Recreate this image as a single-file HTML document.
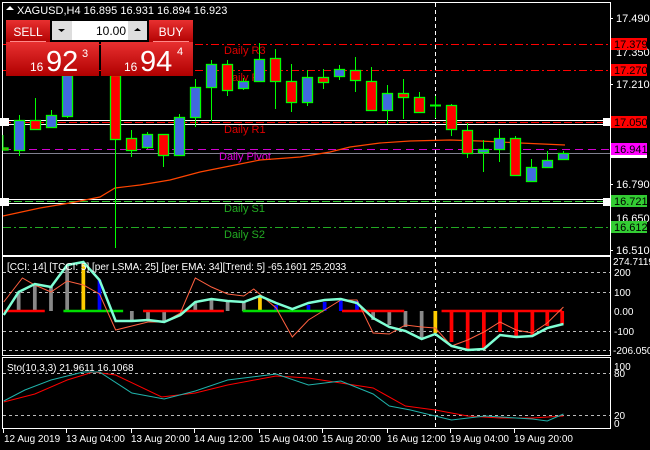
<!DOCTYPE html>
<html><head><meta charset="utf-8"><style>
html,body{margin:0;padding:0;background:#000;width:650px;height:450px;overflow:hidden}
svg{display:block;font-family:"Liberation Sans",sans-serif}
</style></head><body>
<svg width="650" height="450" viewBox="0 0 650 450" xmlns="http://www.w3.org/2000/svg">
<rect width="650" height="450" fill="#000"/>
<!-- pane borders -->
<rect x="2.5" y="2.5" width="608" height="253" fill="none" stroke="#fff"/>
<rect x="2.5" y="256.5" width="608" height="99" fill="none" stroke="#fff"/>
<rect x="2.5" y="357.5" width="608" height="71" fill="none" stroke="#fff"/>

<!-- level lines -->
<line x1="3" y1="44.5" x2="610" y2="44.5" stroke="#f00" stroke-dasharray="8,3,2,3"/>
<line x1="3" y1="70.5" x2="610" y2="70.5" stroke="#f00" stroke-dasharray="8,3,2,3"/>
<line x1="3" y1="120.5" x2="610" y2="120.5" stroke="#fff"/>
<line x1="3" y1="124.5" x2="610" y2="124.5" stroke="#fff"/>
<line x1="3" y1="122.5" x2="610" y2="122.5" stroke="#f00" stroke-dasharray="8,3"/>
<line x1="3" y1="149.5" x2="610" y2="149.5" stroke="#d000d0" stroke-dasharray="8,5"/>
<line x1="3" y1="153.5" x2="610" y2="153.5" stroke="#808090"/>
<line x1="3" y1="199.5" x2="610" y2="199.5" stroke="#fff"/>
<line x1="3" y1="203.5" x2="610" y2="203.5" stroke="#fff"/>
<line x1="3" y1="201.5" x2="610" y2="201.5" stroke="#3c3" stroke-dasharray="8,3"/>
<line x1="3" y1="227.5" x2="610" y2="227.5" stroke="#2a2" stroke-dasharray="8,3,2,3"/>
<rect x="0" y="118" width="9" height="8" fill="#fff"/>
<rect x="0" y="198" width="9" height="8" fill="#fff"/>
<rect x="603" y="118" width="7" height="8" fill="#fff"/>
<rect x="603" y="198" width="7" height="8" fill="#fff"/>

<!-- vertical dashed line -->
<line x1="435.5" y1="3" x2="435.5" y2="429" stroke="#fff" stroke-dasharray="4,3"/>

<!-- labels -->
<g font-size="11">
<text x="224" y="54" fill="#e00000">Daily R3</text>
<text x="224" y="81" fill="#e00000">Daily R2</text>
<text x="224" y="133" fill="#e00000">Daily R1</text>
<text x="219" y="160" fill="#e000e0">Daily Pivot</text>
<text x="224" y="212" fill="#2a2">Daily S1</text>
<text x="224" y="238" fill="#2a2">Daily S2</text>
</g>

<!-- MA -->
<polyline fill="none" stroke="#ff4500" stroke-width="1.2" points="3,216 40,208 70,203 100,197 115,188 140,185 170,180 200,172 230,166 260,160 300,157 330,152 350,147 380,143 410,141 450,140 480,141 520,143 565,145"/>

<!-- candles -->
<g stroke="#0f0" stroke-width="1">
<line x1="19.5" y1="115" x2="19.5" y2="156"/><line x1="35.5" y1="98" x2="35.5" y2="129"/><line x1="51.5" y1="110" x2="51.5" y2="127"/><line x1="67.5" y1="70" x2="67.5" y2="118"/>
<line x1="115.5" y1="75" x2="115.5" y2="248"/><line x1="131.5" y1="130" x2="131.5" y2="157"/><line x1="147.5" y1="132" x2="147.5" y2="149"/><line x1="163.5" y1="134" x2="163.5" y2="167"/>
<line x1="179.5" y1="114" x2="179.5" y2="156"/><line x1="195.5" y1="79" x2="195.5" y2="127"/><line x1="211.5" y1="60" x2="211.5" y2="121"/><line x1="227.5" y1="60" x2="227.5" y2="96"/>
<line x1="243.5" y1="78" x2="243.5" y2="90"/><line x1="259.5" y1="43" x2="259.5" y2="81"/><line x1="275.5" y1="49" x2="275.5" y2="109"/><line x1="291.5" y1="64" x2="291.5" y2="112"/>
<line x1="307.5" y1="70" x2="307.5" y2="106"/><line x1="323.5" y1="69" x2="323.5" y2="89"/><line x1="339.5" y1="65" x2="339.5" y2="80"/><line x1="355.5" y1="57" x2="355.5" y2="92"/>
<line x1="371.5" y1="67" x2="371.5" y2="111"/><line x1="387.5" y1="85" x2="387.5" y2="124"/><line x1="403.5" y1="79" x2="403.5" y2="119"/><line x1="419.5" y1="92" x2="419.5" y2="113"/>
<line x1="435.5" y1="96" x2="435.5" y2="118"/><line x1="430" y1="105.5" x2="441" y2="105.5" stroke-width="2"/><line x1="451.5" y1="104" x2="451.5" y2="136"/><line x1="467.5" y1="123" x2="467.5" y2="158"/>
<line x1="483.5" y1="140" x2="483.5" y2="172"/><line x1="499.5" y1="129" x2="499.5" y2="162"/><line x1="515.5" y1="136" x2="515.5" y2="175"/><line x1="531.5" y1="159" x2="531.5" y2="181"/>
<line x1="547.5" y1="151" x2="547.5" y2="167"/><line x1="563.5" y1="151" x2="563.5" y2="160"/>
<line x1="3" y1="135" x2="3" y2="150"/>
</g>
<g stroke="#0f0" stroke-width="1.3">
<rect x="3" y="148" width="5" height="2" fill="#f00"/>
<rect x="14.5" y="120.5" width="10" height="30" fill="#4169e1"/>
<rect x="30.5" y="120.5" width="10" height="9" fill="#f00"/>
<rect x="46.5" y="115.5" width="10" height="12" fill="#4169e1"/>
<rect x="62.5" y="75.5" width="10" height="41" fill="#4169e1"/>
<rect x="110.5" y="75.5" width="10" height="64" fill="#f00"/>
<rect x="126.5" y="138.5" width="10" height="12" fill="#f00"/>
<rect x="142.5" y="134.5" width="10" height="13" fill="#4169e1"/>
<rect x="158.5" y="134.5" width="10" height="21" fill="#f00"/>
<rect x="174.5" y="117.5" width="10" height="38" fill="#4169e1"/>
<rect x="190.5" y="87.5" width="10" height="30" fill="#4169e1"/>
<rect x="206.5" y="64.5" width="10" height="23" fill="#4169e1"/>
<rect x="222.5" y="64.5" width="10" height="26" fill="#f00"/>
<rect x="238.5" y="81.5" width="10" height="7" fill="#4169e1"/>
<rect x="254.5" y="59.5" width="10" height="22" fill="#4169e1"/>
<rect x="270.5" y="58.5" width="10" height="23" fill="#f00"/>
<rect x="286.5" y="81.5" width="10" height="21" fill="#f00"/>
<rect x="302.5" y="77.5" width="10" height="25" fill="#4169e1"/>
<rect x="318.5" y="77.5" width="10" height="5" fill="#f00"/>
<rect x="334.5" y="69.5" width="10" height="7" fill="#4169e1"/>
<rect x="350.5" y="70.5" width="10" height="10" fill="#f00"/>
<rect x="366.5" y="81.5" width="10" height="29" fill="#f00"/>
<rect x="382.5" y="93.5" width="10" height="17" fill="#4169e1"/>
<rect x="398.5" y="93.5" width="10" height="4" fill="#f00"/>
<rect x="414.5" y="97.5" width="10" height="15" fill="#f00"/>
<rect x="446.5" y="105.5" width="10" height="24" fill="#f00"/>
<rect x="462.5" y="130.5" width="10" height="23" fill="#f00"/>
<rect x="478.5" y="149.5" width="10" height="3" fill="#4169e1"/>
<rect x="494.5" y="138.5" width="10" height="11" fill="#4169e1"/>
<rect x="510.5" y="138.5" width="10" height="37" fill="#f00"/>
<rect x="526.5" y="167.5" width="10" height="14" fill="#4169e1"/>
<rect x="542.5" y="160.5" width="10" height="7" fill="#4169e1"/>
<rect x="558.5" y="153.5" width="10" height="6" fill="#4169e1"/>
</g>

<!-- price axis -->
<g font-size="11" fill="#fff">
<text x="616" y="22">17.490</text>
<text x="616" y="56">17.350</text>
<text x="616" y="88">17.210</text>
<text x="616" y="188">16.790</text>
<text x="616" y="222">16.650</text>
<text x="616" y="254">16.510</text>
</g>
<g stroke="#fff"><line x1="610" y1="18.5" x2="613" y2="18.5"/><line x1="610" y1="184.5" x2="613" y2="184.5"/><line x1="610" y1="250.5" x2="613" y2="250.5"/><line x1="610" y1="84.5" x2="613" y2="84.5"/></g>
<rect x="611" y="38" width="36" height="12" fill="#f00"/><text x="614" y="48" font-size="11" fill="#000">17.379</text>
<rect x="611" y="64" width="36" height="12" fill="#f00"/><text x="614" y="74" font-size="11" fill="#000">17.270</text>
<rect x="611" y="116" width="36" height="12" fill="#f00"/><text x="614" y="126" font-size="11" fill="#000">17.050</text>
<rect x="611" y="152" width="36" height="6" fill="#fff"/>
<rect x="611" y="143" width="36" height="12" fill="#f0f"/><text x="614" y="153" font-size="11" fill="#000">16.941</text>
<rect x="611" y="195" width="36" height="12" fill="#3c3"/><text x="614" y="205" font-size="11" fill="#000">16.721</text>
<rect x="611" y="221" width="36" height="12" fill="#3c3"/><text x="614" y="231" font-size="11" fill="#000">16.612</text>

<!-- header -->
<polygon points="6,10 10,6 14,10" fill="#fff"/>
<text x="17" y="14" font-size="11" fill="#fff">XAGUSD,H4  16.895 16.931 16.894 16.923</text>

<!-- trade panel -->
<defs><linearGradient id="rg" x1="0" y1="0" x2="0" y2="1"><stop offset="0" stop-color="#e83030"/><stop offset="1" stop-color="#b00000"/></linearGradient></defs>
<rect x="6" y="20" width="44" height="23" fill="url(#rg)"/>
<line x1="10" y1="41.5" x2="46" y2="41.5" stroke="#f88"/>
<text x="28" y="36" font-size="12" fill="#fff" text-anchor="middle">SELL</text>
<rect x="50" y="20" width="99" height="23" fill="#000"/>
<rect x="52" y="21" width="20" height="19" fill="#ddd"/><polygon points="58,29 65,29 61.5,32" fill="#000"/>
<rect x="72" y="21" width="56" height="19" fill="#fff"/><text x="126" y="35" font-size="12" fill="#000" text-anchor="end">10.00</text>
<rect x="128" y="21" width="19" height="19" fill="#ddd"/><polygon points="134,31 141,31 137.5,28" fill="#000"/>
<rect x="149" y="20" width="44" height="23" fill="url(#rg)"/>
<line x1="153" y1="41.5" x2="189" y2="41.5" stroke="#f88"/>
<text x="171" y="36" font-size="12" fill="#fff" text-anchor="middle">BUY</text>
<rect x="6" y="42" width="93" height="34" fill="url(#rg)"/>
<rect x="101" y="42" width="92" height="34" fill="url(#rg)"/>
<text x="30" y="71" font-size="12" fill="#fff">16</text>
<text x="46" y="71" font-size="29" fill="#fff">92</text>
<text x="82" y="57" font-size="11" fill="#fff">3</text>
<text x="124" y="71" font-size="12" fill="#fff">16</text>
<text x="140" y="71" font-size="29" fill="#fff">94</text>
<text x="177" y="55" font-size="11" fill="#fff">4</text>

<!-- CCI pane -->
<g stroke="#bbb" stroke-dasharray="3,3"><line x1="3" y1="272.5" x2="610" y2="272.5"/><line x1="3" y1="292.5" x2="610" y2="292.5"/><line x1="3" y1="331.5" x2="610" y2="331.5"/><line x1="3" y1="350.5" x2="610" y2="350.5"/>
<line x1="3" y1="373.5" x2="610" y2="373.5"/><line x1="3" y1="415.5" x2="610" y2="415.5"/></g>
<g transform="matrix(1.2438 0 0 1 0 0)">
<g stroke-width="3">
<line x1="15" y1="311" x2="15" y2="292" stroke="#888"/><line x1="28" y1="311" x2="28" y2="284" stroke="#888"/><line x1="41" y1="311" x2="41" y2="287" stroke="#888"/><line x1="54" y1="311" x2="54" y2="265" stroke="#888"/><line x1="67" y1="311" x2="67" y2="264" stroke="#fc0"/><line x1="80" y1="311" x2="80" y2="280" stroke="#00f"/>
<line x1="106" y1="311" x2="106" y2="321" stroke="#888"/><line x1="119" y1="311" x2="119" y2="320" stroke="#888"/><line x1="132" y1="311" x2="132" y2="322" stroke="#888"/>
<line x1="157" y1="311" x2="157" y2="302" stroke="#888"/><line x1="170" y1="311" x2="170" y2="300" stroke="#888"/><line x1="183" y1="311" x2="183" y2="301" stroke="#888"/><line x1="196" y1="311" x2="196" y2="302" stroke="#888"/><line x1="209" y1="311" x2="209" y2="297" stroke="#fc0"/>
<line x1="222" y1="311" x2="222" y2="305" stroke="#00f"/><line x1="248" y1="311" x2="248" y2="305" stroke="#00f"/><line x1="261" y1="311" x2="261" y2="302" stroke="#00f"/><line x1="274" y1="311" x2="274" y2="300" stroke="#00f"/><line x1="287" y1="311" x2="287" y2="301" stroke="#00f"/>
<line x1="300" y1="311" x2="300" y2="320" stroke="#888"/><line x1="313" y1="311" x2="313" y2="325" stroke="#888"/><line x1="326" y1="311" x2="326" y2="327" stroke="#888"/><line x1="339" y1="311" x2="339" y2="339" stroke="#888"/><line x1="350" y1="311" x2="350" y2="333" stroke="#fc0"/>
<line x1="363" y1="311" x2="363" y2="342" stroke="#f00"/><line x1="376" y1="311" x2="376" y2="350" stroke="#f00"/><line x1="389" y1="311" x2="389" y2="350" stroke="#f00"/><line x1="402" y1="311" x2="402" y2="332" stroke="#f00"/><line x1="415" y1="311" x2="415" y2="336" stroke="#f00"/><line x1="428" y1="311" x2="428" y2="335" stroke="#f00"/><line x1="440" y1="311" x2="440" y2="326" stroke="#f00"/><line x1="452" y1="311" x2="452" y2="324" stroke="#f00"/>
</g>
<g stroke-width="2.5">
<line x1="3" y1="311" x2="36" y2="311" stroke="#f00"/><line x1="51" y1="311" x2="99" y2="311" stroke="#0d0"/>
<line x1="115" y1="311" x2="180" y2="311" stroke="#f00"/><line x1="195" y1="311" x2="260" y2="311" stroke="#0d0"/>
<line x1="275" y1="311" x2="325" y2="311" stroke="#f00"/><line x1="355" y1="311" x2="452" y2="311" stroke="#f00"/>
</g>
<polyline fill="none" stroke="#ff6040" stroke-width="1" vector-effect="non-scaling-stroke" points="3,302 18,278 28,285 41,292 54,281 67,285 80,294 93,330 106,326 119,322 132,322 145,313 157,278 170,287 183,294 196,296 204,289 222,308 235,337 248,320 261,310 274,300 287,300 300,333 313,334 326,325 339,327 350,328 363,346 376,340 389,332 402,322 415,330 428,333 440,323 453,307"/>
<polyline fill="none" stroke="#7fffd4" stroke-width="2.5" vector-effect="non-scaling-stroke" points="3,315 15,292 28,284 41,287 54,265 67,262 80,280 93,321 106,321 119,320 132,322 145,315 157,302 170,299 183,301 196,302 209,296 222,303 235,309 248,303 261,300 274,299 287,303 300,318 313,327 326,331 339,339 350,334 363,346 376,350 389,349 402,335 415,337 428,336 440,328 453,324"/>
<polyline fill="none" stroke="#f00" stroke-width="1" vector-effect="non-scaling-stroke" points="3,402 28,394 54,380 75,372 93,375 130,397 157,393 183,385 222,376 248,378 274,383 300,388 326,406 350,410 376,416 402,418 428,418 453,416"/>
<polyline fill="none" stroke="#20b2aa" stroke-width="1" vector-effect="non-scaling-stroke" points="3,401 20,390 41,380 67,372 80,372 106,393 132,399 157,391 183,380 222,374 248,385 274,381 300,394 313,406 330,410 363,420 390,416 428,419 440,421 453,414"/>
</g>
<text x="7" y="270" font-size="10" fill="#fff">[CCI: 14] [TCCI: 5] [per LSMA: 25] [per EMA: 34][Trend: 5]  -65.1601 25.2033</text>
<text x="7" y="371" font-size="10" fill="#fff">Sto(10,3,3) 21.9611 16.1068</text>
<g font-size="10" fill="#fff">
<text x="613" y="265">274.7119</text><text x="614" y="276">200</text><text x="614" y="296">100</text><text x="614" y="315">0.00</text><text x="614" y="335">-100</text><text x="613" y="354">-206.050</text>
<text x="614" y="370">100</text><text x="614" y="377">80</text><text x="614" y="419">20</text><text x="614" y="427">0</text>
</g>
<!-- time axis -->
<g stroke="#fff"><line x1="3.5" y1="429" x2="3.5" y2="433"/><line x1="66.5" y1="429" x2="66.5" y2="433"/><line x1="131.5" y1="429" x2="131.5" y2="433"/><line x1="194.5" y1="429" x2="194.5" y2="433"/><line x1="259.5" y1="429" x2="259.5" y2="433"/><line x1="322.5" y1="429" x2="322.5" y2="433"/><line x1="387.5" y1="429" x2="387.5" y2="433"/><line x1="450.5" y1="429" x2="450.5" y2="433"/><line x1="514.5" y1="429" x2="514.5" y2="433"/></g>
<g font-size="10" fill="#fff">
<text x="4" y="442">12 Aug 2019</text><text x="66" y="442">13 Aug 04:00</text><text x="131" y="442">13 Aug 20:00</text><text x="194" y="442">14 Aug 12:00</text><text x="259" y="442">15 Aug 04:00</text><text x="322" y="442">15 Aug 20:00</text><text x="387" y="442">16 Aug 12:00</text><text x="450" y="442">19 Aug 04:00</text><text x="514" y="442">19 Aug 20:00</text>
</g>
</svg>
</body></html>
